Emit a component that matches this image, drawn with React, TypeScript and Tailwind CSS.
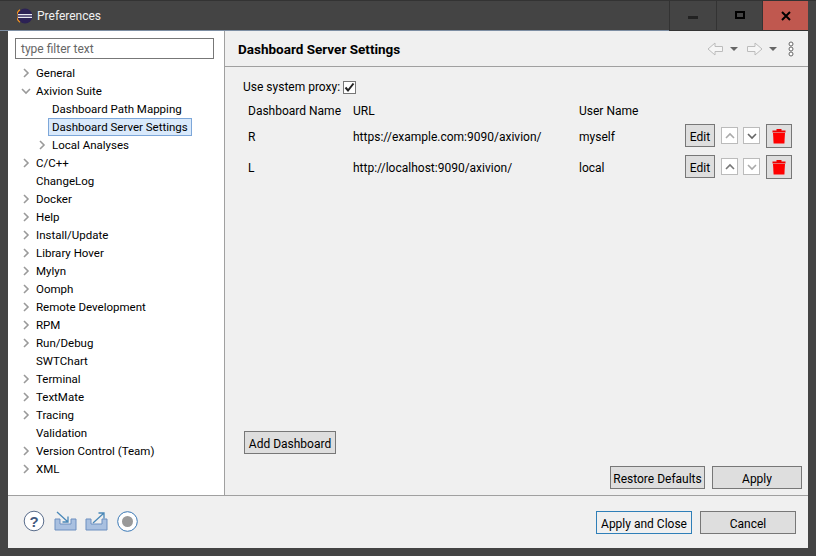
import React from 'react';

const font = '[font-family:Roboto,"Open_Sans",sans-serif]';

const treeItems = [
  { label: 'General', arrow: 'right', indent: 0 },
  { label: 'Axivion Suite', arrow: 'down', indent: 0 },
  { label: 'Dashboard Path Mapping', indent: 1 },
  { label: 'Dashboard Server Settings', indent: 1, selected: true },
  { label: 'Local Analyses', arrow: 'right', indent: 1 },
  { label: 'C/C++', arrow: 'right', indent: 0 },
  { label: 'ChangeLog', indent: 0 },
  { label: 'Docker', arrow: 'right', indent: 0 },
  { label: 'Help', arrow: 'right', indent: 0 },
  { label: 'Install/Update', arrow: 'right', indent: 0 },
  { label: 'Library Hover', arrow: 'right', indent: 0 },
  { label: 'Mylyn', arrow: 'right', indent: 0 },
  { label: 'Oomph', arrow: 'right', indent: 0 },
  { label: 'Remote Development', arrow: 'right', indent: 0 },
  { label: 'RPM', arrow: 'right', indent: 0 },
  { label: 'Run/Debug', arrow: 'right', indent: 0 },
  { label: 'SWTChart', indent: 0 },
  { label: 'Terminal', arrow: 'right', indent: 0 },
  { label: 'TextMate', arrow: 'right', indent: 0 },
  { label: 'Tracing', arrow: 'right', indent: 0 },
  { label: 'Validation', indent: 0 },
  { label: 'Version Control (Team)', arrow: 'right', indent: 0 },
  { label: 'XML', arrow: 'right', indent: 0 },
];

const servers = [
  { name: 'R', url: 'https://example.com:9090/axivion/', user: 'myself', upOff: true, downOff: false },
  { name: 'L', url: 'http://localhost:9090/axivion/', user: 'local', upOff: false, downOff: true },
];

const Chevron = ({ dir, color = '#9a9a9a' }: { dir: string; color?: string }) => (
  <svg width="10" height="10" viewBox="0 0 10 10" fill="none" stroke={color} strokeWidth="1.6">
    {dir === 'right' && <path d="M3 1l4 4-4 4" />}
    {dir === 'down' && <path d="M1 3l4 4 4-4" />}
    {dir === 'up' && <path d="M1 7l4-4 4 4" />}
  </svg>
);

const Btn = ({ children, className = '' }: { children: React.ReactNode; className?: string }) => (
  <button className={`h-[23px] pt-[2px] border border-[#777] bg-[#dedede] text-[12px] leading-none text-black flex items-center justify-center ${className}`}>
    {children}
  </button>
);

const Arrow = ({ flip }: { flip?: boolean }) => (
  <svg width="16" height="14" viewBox="0 0 16 14" fill="#f6f6f6" stroke="#bcbcbc" strokeWidth="1">
    <path d={flip ? 'M.5 4.500h7.500v-3.500l7 6-7 6v-3.500h-7.500z' : 'M15.500 4.500h-7.500v-3.500l-7 6 7 6v-3.500h7.500z'} />
  </svg>
);

const Caret = () => <span className="w-0 h-0 border-x-[4px] border-x-transparent border-t-[4px] border-t-[#666]" />;

const TrashIcon = () => (
  <svg width="14" height="16" viewBox="0 0 14 16">
    <path d="M4.500 1h5v1.500h4v2h-13v-2h4z" fill="#f00000" />
    <path d="M1 5h12l-.6 10.500h-10.800z" fill="#ff0000" />
  </svg>
);

function ServerRow({ name, url, user, upOff, downOff }: (typeof servers)[number]) {
  return (
    <div className="flex items-center h-[31px] pl-[23px] pr-[15px]">
      <span className="w-[105px] pt-[2px]">{name}</span>
      <span className="w-[226px] pt-[2px]">{url}</span>
      <span className="w-[106px] pt-[2px]">{user}</span>
      <Btn className="w-[30px]">Edit</Btn>
      <span className="ml-[6px] w-[17px] h-[17px] border border-[#bbb] bg-white flex items-center justify-center">
        <Chevron dir="up" color={upOff ? '#aaa' : '#777'} />
      </span>
      <span className="ml-[5px] w-[17px] h-[17px] border border-[#bbb] bg-white flex items-center justify-center">
        <Chevron dir="down" color={downOff ? '#aaa' : '#666'} />
      </span>
      <span className="ml-[6px] w-[26px] h-[24px] border border-[#777] bg-[#dedede] flex items-center justify-center">
        <TrashIcon />
      </span>
    </div>
  );
}

export default function App() {
  return (
    <div className={`w-[816px] h-[556px] bg-[#444444] flex flex-col overflow-hidden text-[12px] text-black ${font}`}>
      {/* title bar */}
      <div className="h-[31px] flex items-stretch shrink-0 border-t border-t-[#333]">
        <div className="flex items-center flex-1 pl-[17px] gap-[4px] border-b border-b-[#7d8ea3]">
          <svg width="16" height="16" viewBox="0 0 16 16">
            <circle cx="8" cy="8" r="7.500" fill="#2c2255" />
            <path d="M3 1.800A7.500 7.500 0 0 0 3 14.200" fill="none" stroke="#f7941e" strokeWidth="1.200" />
            <rect x="1" y="6" width="14" height="1.300" fill="#e8e8f0" />
            <rect x="1" y="8.700" width="14" height="1.300" fill="#e8e8f0" />
          </svg>
          <span className="text-[#f0f0f0]">Preferences</span>
        </div>
        <div className="w-[47px] border-l border-b border-[#333] flex items-center justify-center">
          <span className="w-[10px] h-[3px] bg-[#222] mt-[4px]" />
        </div>
        <div className="w-[46px] border-l border-b border-[#333] flex items-center justify-center">
          <span className="w-[10px] h-[8px] border-2 border-black -mt-[1px]" />
        </div>
        <div className="w-[46px] bg-[#c0584f] flex items-center justify-center border-l border-b border-[#333] font-bold">
          <svg width="10" height="10" viewBox="0 0 10 10" stroke="#000" strokeWidth="2"><path d="M1 1l8 8M9 1l-8 8" /></svg>
        </div>
        <div className="w-[8px]" />
      </div>

      <div className="flex-1 mx-[8px] mb-[8px] flex flex-col bg-[#f0f0f0] min-h-0">
        <div className="flex flex-1 min-h-0 border-b border-[#a0a0a0]">
          {/* left tree */}
          <aside className="w-[217px] bg-white border-r border-[#a0a0a0] shrink-0 px-[7px] pt-[7px]">
            <div className="h-[21px] w-[199px] border border-[#777] pl-[5px] flex items-center text-[#666]">type filter text</div>
            <ul className="mt-[5px] text-[11.5px]">
              {treeItems.map((item) => (
                <li key={item.label} className="h-[18px] flex items-center" style={{ paddingLeft: item.indent ? 16 : 0 }}>
                  <span className="w-[21px] pl-[1px] flex justify-center shrink-0">
                    {item.arrow && <Chevron dir={item.arrow} />}
                  </span>
                  {item.selected ? (
                    <span className="-ml-[4px] pl-[3px] pr-[3px] pt-[2px] h-[18px] flex items-center bg-[#d9e9fb] border border-[#7da7d9]">
                      {item.label}
                    </span>
                  ) : (
                    <span className="pt-[2px]">{item.label}</span>
                  )}
                </li>
              ))}
            </ul>
          </aside>

          {/* right page */}
          <main className="flex-1 flex flex-col min-w-0">
            <div className="h-[36px] shrink-0 flex items-center border-b border-[#a0a0a0] pl-[13px] pr-[14px]">
              <h2 className="text-[13.5px] font-bold flex-1 mt-[2px]">Dashboard Server Settings</h2>
              <div className="flex items-center">
                <Arrow />
                <span className="w-[7px]" />
                <Caret />
                <span className="w-[9px]" />
                <Arrow flip />
                <span className="w-[6px]" />
                <Caret />
                <svg className="ml-[11px]" width="6" height="16" viewBox="0 0 6 16" fill="#fff" stroke="#666" strokeWidth="1">
                  <circle cx="3" cy="3" r="2" /><circle cx="3" cy="8" r="2" /><circle cx="3" cy="13" r="2" />
                </svg>
              </div>
            </div>

            <div className="flex-1 flex flex-col min-h-0">
              <div className="flex items-center pl-[18px] mt-[11px] h-[18px]">
                <span>Use system proxy:</span>
                <span className="ml-[3px] w-[13px] h-[13px] border border-[#777] bg-white flex items-center justify-center">
                  <svg width="11" height="11" viewBox="0 0 11 11" fill="none" stroke="#222" strokeWidth="2"><path d="M1.500 5.500l2.500 3 5.500-7" /></svg>
                </span>
              </div>
              <div className="flex items-center h-[18px] mt-[6px] pl-[23px]">
                <span className="w-[105px]">Dashboard Name</span>
                <span className="w-[226px]">URL</span>
                <span>User Name</span>
              </div>
              <div>
                {servers.map((s) => <ServerRow key={s.name} {...s} />)}
              </div>

              <div className="mt-auto pl-[19px]">
                <Btn className="w-[92px]">Add Dashboard</Btn>
              </div>
              <div className="flex justify-end gap-[7px] pr-[6px] mt-[12px] mb-[6px]">
                <Btn className="w-[95px]">Restore Defaults</Btn>
                <Btn className="w-[90px]">Apply</Btn>
              </div>
            </div>
          </main>
        </div>

        {/* footer */}
        <div className="h-[52px] pt-[1px] shrink-0 flex items-center pl-[15px] pr-[12px]">
          <div className="flex items-center flex-1 -mt-[3px]">
            <svg width="22" height="22" viewBox="0 0 22 22">
              <circle cx="11" cy="11" r="9.800" fill="#fff" stroke="#5a6d8c" strokeWidth="1" />
              <text x="11" y="16.500" textAnchor="middle" fontSize="15" fontWeight="bold" fill="#445a80" fontFamily="Liberation Sans">?</text>
            </svg>
            <svg width="23" height="20" viewBox="0 0 23 20" fill="none" className="ml-[9px]">
              <path d="M1 8h5v5h11V8h5v11H1z" fill="#a9c0e0" stroke="#6d8fc0" />
              <path d="M3 1l11 10M14 5.500V11H8.500" stroke="#4a88b8" strokeWidth="1.300" />
            </svg>
            <svg width="23" height="20" viewBox="0 0 23 20" fill="none" className="ml-[8px]">
              <path d="M1 8h5v5h11V8h5v11H1z" fill="#a9c0e0" stroke="#6d8fc0" />
              <path d="M8 12L19 2M13.500 2H19v5.500" stroke="#4a88b8" strokeWidth="1.300" />
            </svg>
            <svg width="21" height="21" viewBox="0 0 21 21" className="ml-[9px]">
              <circle cx="10.500" cy="10.500" r="9.800" fill="#fff" stroke="#3a78b5" strokeWidth="1" />
              <circle cx="10.500" cy="10.500" r="5.500" fill="#999" />
            </svg>
          </div>
          <Btn className="w-[96px] !border-[#2f7fb8] !bg-[#f0f0f0]">Apply and Close</Btn>
          <Btn className="w-[96px] ml-[8px]">Cancel</Btn>
        </div>
      </div>
    </div>
  );
}
